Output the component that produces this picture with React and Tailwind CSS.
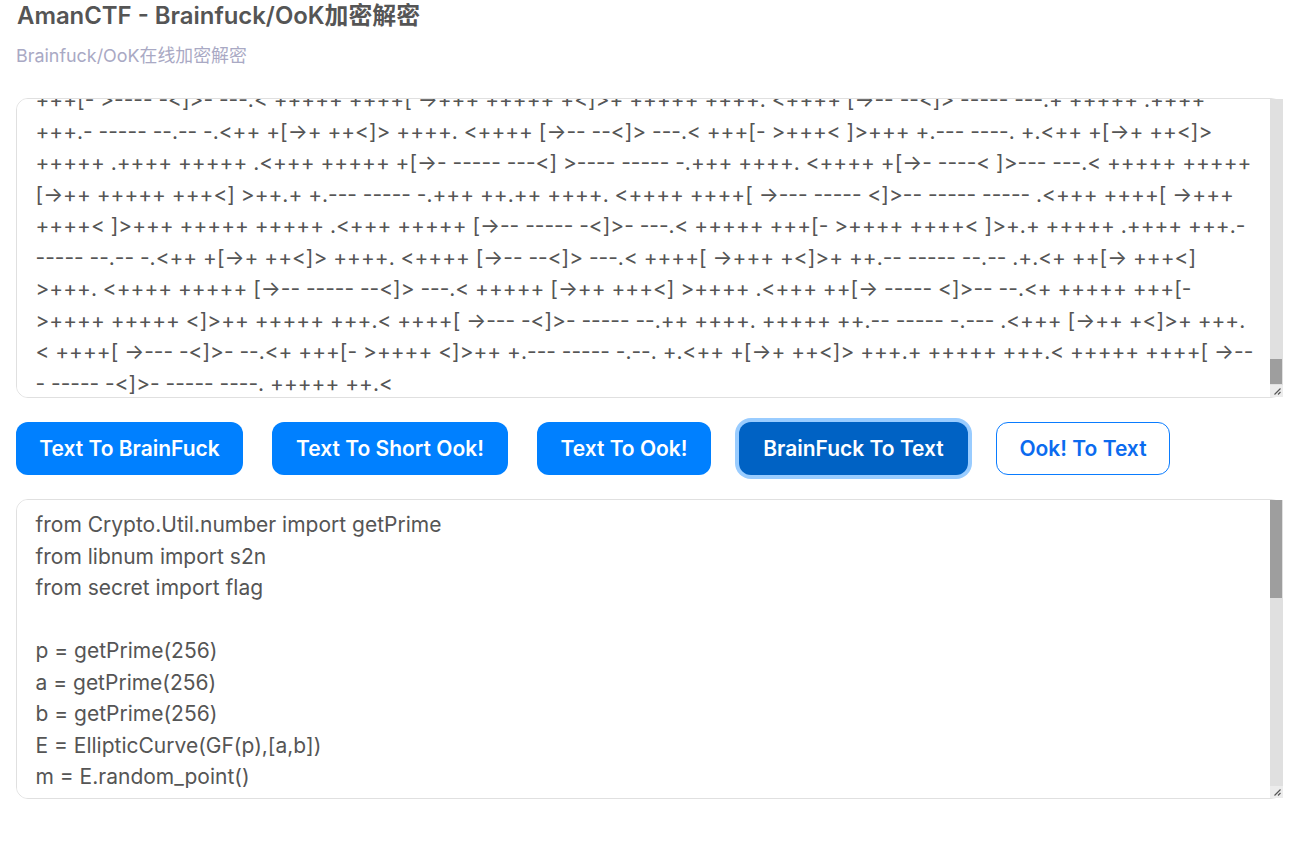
import { useEffect, useRef } from 'react';

const cipherLines = [
  '+++[- >---- -<]>- ---.< +++++ ++++[ ->+++ +++++ +<]>+ +++++ ++++. <++++ [->-- --<]> ----- ---.+ +++++ .++++',
  '+++.- ----- --.-- -.<++ +[->+ ++<]> ++++. <++++ [->-- --<]> ---.< +++[- >+++< ]>+++ +.--- ----. +.<++ +[->+ ++<]>',
  '+++++ .++++ +++++ .<+++ +++++ +[->- ----- ---<] >---- ----- -.+++ ++++. <++++ +[->- ----< ]>--- ---.< +++++ +++++',
  '[->++ +++++ +++<] >++.+ +.--- ----- -.+++ ++.++ ++++. <++++ ++++[ ->--- ----- <]>-- ----- ----- .<+++ ++++[ ->+++',
  '++++< ]>+++ +++++ +++++ .<+++ +++++ [->-- ----- -<]>- ---.< +++++ +++[- >++++ ++++< ]>+.+ +++++ .++++ +++.-',
  '----- --.-- -.<++ +[->+ ++<]> ++++. <++++ [->-- --<]> ---.< ++++[ ->+++ +<]>+ ++.-- ----- --.-- .+.<+ ++[-> +++<]',
  '>+++. <++++ +++++ [->-- ----- --<]> ---.< +++++ [->++ +++<] >++++ .<+++ ++[-> ----- <]>-- --.<+ +++++ +++[-',
  '>++++ +++++ <]>++ +++++ +++.< ++++[ ->--- -<]>- ----- --.++ ++++. +++++ ++.-- ----- -.--- .<+++ [->++ +<]>+ +++.',
  '< ++++[ ->--- -<]>- --.<+ +++[- >++++ <]>++ +.--- ----- -.--. +.<++ +[->+ ++<]> +++.+ +++++ +++.< +++++ ++++[ ->--',
  '- ----- -<]>- ----- ----. +++++ ++.<',
];

// earlier part of the cipher text, only there so the box really scrolls
const cipherText = Array(100).fill(cipherLines[2]).join('\n') + '\n' + cipherLines.join('\n');

const plainLines = [
  'from Crypto.Util.number import getPrime',
  'from libnum import s2n',
  'from secret import flag',
  '',
  'p = getPrime(256)',
  'a = getPrime(256)',
  'b = getPrime(256)',
  'E = EllipticCurve(GF(p),[a,b])',
  'm = E.random_point()',
];

const plainText = plainLines.join('\n') + '\n'.repeat(20);

const areaClass =
  "block w-full h-[300px] resize-none rounded-xl border border-[#e0e0e0] bg-white pt-[9px] pb-[11px] pl-[18.5px] pr-[28px] leading-[31.5px] text-[#555555] outline-none [font-family:Inter,'Noto_Sans_CJK_SC',sans-serif]";

const buttonClass = 'h-[53px] rounded-xl bg-[#0080ff] pt-[1px] text-[21px] font-semibold text-white';

// the browser hides native scrollbars here, so track, thumb and grip are drawn over the box
function ScrollBar({ thumbClass }) {
  return (
    <div className="absolute top-[1px] right-0 bottom-[1px] flex w-[13px] flex-col">
      <div className="flex-1 bg-[#e0e0e0]">
        <div className={`w-3 bg-[#9e9e9e] ${thumbClass}`} />
      </div>
      <div className="flex h-[12px] items-end justify-end bg-[#ececec]">
        <svg width="9" height="9" viewBox="0 0 9 9" className="mr-[1px] mb-[1px]">
          <path d="M7.5 1.5 1.5 7.5M7.5 5 5 7.5" stroke="#555555" strokeWidth="1.2" fill="none" />
        </svg>
      </div>
    </div>
  );
}

export default function App() {
  const cipherRef = useRef(null);

  useEffect(() => {
    const el = cipherRef.current;
    el.scrollTop = el.scrollHeight - el.clientHeight - 13;
  }, []);

  return (
    <div className="min-h-[855px] bg-white font-['Inter','Noto_Sans_CJK_SC',sans-serif]">
      <div className="w-[1267px] ml-4">
        <h1 className="h-[32px] pl-[1px] text-[23.9px] leading-[32px] font-semibold text-[#555555]">
          AmanCTF - Brainfuck/OoK加密解密
        </h1>
        <p className="mt-[10px] h-[28px] text-[17.9px] leading-[28px] text-[#a9a9c4]">
          Brainfuck/OoK在线加密解密
        </p>

        <div className="relative mt-[28px]">
          <textarea
            ref={cipherRef}
            className={`${areaClass} text-[20.94px]`}
            defaultValue={cipherText}
            spellCheck={false}
          />
          <ScrollBar thumbClass="mt-[260px] h-[25px]" />
        </div>

        <div className="mt-6 flex items-center">
          <button className={`${buttonClass} w-[227px]`}>Text To BrainFuck</button>
          <button className={`${buttonClass} ml-[29px] w-[236px]`}>Text To Short Ook!</button>
          <button className={`${buttonClass} ml-[29px] w-[174px]`}>Text To Ook!</button>
          <button className="ml-[28px] h-[53px] w-[229px] rounded-xl bg-[#0062c4] pt-[1px] text-[21px] font-semibold text-white ring-4 ring-[#99ccff]">
            BrainFuck To Text
          </button>
          <button className="ml-[28px] h-[53px] w-[174px] rounded-xl border border-[#0a7cff] bg-white pt-[1px] text-[21px] font-semibold text-[#0b6bef]">
            Ook! To Text
          </button>
        </div>

        <div className="relative mt-6">
          <textarea className={`${areaClass} text-[21px]`} defaultValue={plainText} spellCheck={false} />
          <ScrollBar thumbClass="h-[98px]" />
        </div>
      </div>
    </div>
  );
}
